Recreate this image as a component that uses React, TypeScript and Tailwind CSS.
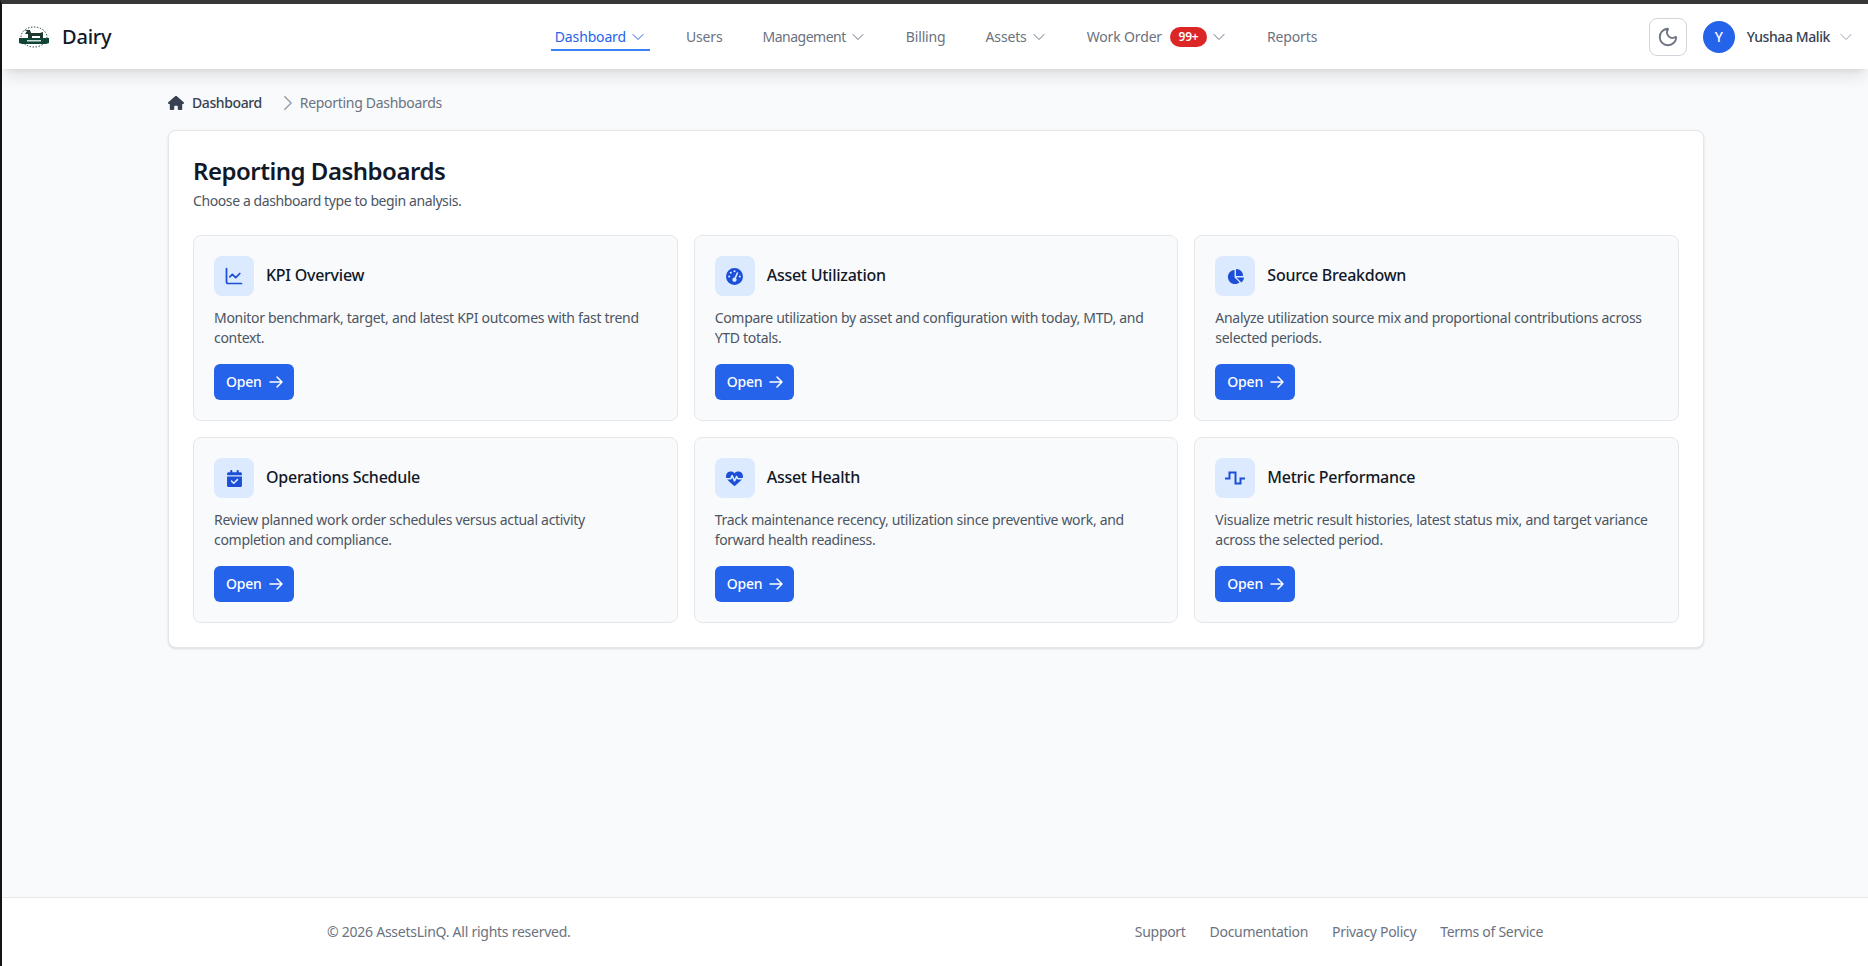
import { ChartLine, Moon } from 'lucide-react';
import { HiOutlineChevronDown, HiOutlineChevronRight, HiOutlineArrowRight } from 'react-icons/hi2';
import { FaHouse, FaGaugeHigh, FaChartPie, FaCalendarCheck, FaHeartPulse } from 'react-icons/fa6';

const navItems = [
  { label: 'Dashboard', chevron: true, active: true },
  { label: 'Users' },
  { label: 'Management', chevron: true, tight: true },
  { label: 'Billing' },
  { label: 'Assets', chevron: true },
  { label: 'Work Order', chevron: true, badge: '99+' },
  { label: 'Reports' },
];

function SquareWave() {
  return (
    <svg width="20" height="20" viewBox="0 0 20 20" fill="none" stroke="currentColor" strokeWidth="2">
      <path d="M0 10.5H4.5V4.5H10.5V15.5H15.5V10.5H20" />
    </svg>
  );
}

const cards = [
  {
    title: 'KPI Overview',
    text: 'Monitor benchmark, target, and latest KPI outcomes with fast trend context.',
    icon: <ChartLine size={20} strokeWidth={2.1} />,
  },
  {
    title: 'Asset Utilization',
    text: 'Compare utilization by asset and configuration with today, MTD, and YTD totals.',
    icon: <FaGaugeHigh size={17} />,
  },
  {
    title: 'Source Breakdown',
    text: 'Analyze utilization source mix and proportional contributions across selected periods.',
    icon: <FaChartPie size={17} />,
  },
  {
    title: 'Operations Schedule',
    text: 'Review planned work order schedules versus actual activity completion and compliance.',
    icon: <FaCalendarCheck size={17} />,
  },
  {
    title: 'Asset Health',
    text: 'Track maintenance recency, utilization since preventive work, and forward health readiness.',
    icon: <FaHeartPulse size={17} />,
  },
  {
    title: 'Metric Performance',
    text: 'Visualize metric result histories, latest status mix, and target variance across the selected period.',
    icon: <SquareWave />,
  },
];

function Logo() {
  return (
    <svg width="32" height="22" viewBox="0 0 32 22" className="shrink-0">
      <ellipse cx="16" cy="11" rx="13" ry="10" fill="none" stroke="#14342b" strokeWidth="1" strokeDasharray="1.4 1.6" />
      <path d="M1 12H31V17L28 18H4L1 17Z" fill="#0f4436" />
      <path d="M10 12V8H7L9 5L6 4H12L13 7H22L25 6V12H22V10H14V12Z" fill="#1d3a30" />
      <rect x="9" y="14" width="14" height="1.5" fill="#cfe0d8" />
    </svg>
  );
}

export default function App() {
  return (
    <div className="h-screen flex flex-col bg-[#f9fafb] border-t-4 border-t-[#373737] border-l-2 border-l-[#141414] font-['Noto_Sans',sans-serif] overflow-hidden">
      <header className="h-[65px] shrink-0 bg-white shadow-lg flex items-center pl-4 pr-[14px] relative">
        <div className="flex-1 flex items-center gap-3">
          <Logo />
          <span className="text-xl font-medium text-[#111827] tracking-[-0.2px]">Dairy</span>
        </div>
        <nav className="flex items-center gap-8 text-sm text-[#6b7280] tracking-[-0.15px]">
          {navItems.map(n => (
            <a
              key={n.label}
              className={`flex items-center gap-1 px-1 h-[26px] mt-[3px] border-b-2 ${
                n.active ? 'text-[#2563eb] border-[#3b82f6]' : 'border-transparent'
              } ${n.tight ? 'tracking-[-0.5px]' : ''}`}
            >
              {n.label}
              {n.badge && (
                <span className="ml-1 h-5 w-[37px] rounded-full bg-[#dc2626] text-white text-xs font-semibold flex items-center justify-center">
                  {n.badge}
                </span>
              )}
              {n.chevron && <HiOutlineChevronDown size={16} />}
            </a>
          ))}
        </nav>
        <div className="flex-1 flex items-center justify-end">
          <button className="w-[38px] h-[38px] rounded-lg border border-[#d1d5db] flex items-center justify-center text-[#6b7280]">
            <Moon size={22} />
          </button>
          <div className="w-8 h-8 ml-4 rounded-full bg-[#2563eb] text-white text-sm font-medium flex items-center justify-center">Y</div>
          <span className="ml-3 text-sm font-medium text-[#374151] tracking-[-0.4px]">Yushaa Malik</span>
          <HiOutlineChevronDown size={16} className="ml-2 text-[#9ca3af]" />
        </div>
      </header>

      <main className="flex-1 w-full max-w-[1538px] mx-auto pl-[2px] pt-6">
        <div className="flex items-center text-sm h-5 mb-[17px]">
          <FaHouse size={16} className="text-[#374151]" />
          <span className="ml-2 font-medium text-[#374151] tracking-[-0.4px]">Dashboard</span>
          <HiOutlineChevronRight size={20} strokeWidth={2} className="ml-4 text-[#9ca3af]" />
          <span className="ml-[2px] text-[#6b7280] tracking-[-0.3px]">Reporting Dashboards</span>
        </div>

        <section className="bg-white border border-[#e5e7eb] rounded-lg shadow-sm p-6">
          <h1 className="text-2xl font-semibold text-[#111827] tracking-[-0.5px]">Reporting Dashboards</h1>
          <p className="mt-1 mb-6 text-sm text-[#4b5563] tracking-[-0.4px]">Choose a dashboard type to begin analysis.</p>
          <div className="grid grid-cols-3 gap-4">
            {cards.map(c => (
              <div key={c.title} className="bg-[#f9fafb] border border-[#e5e7eb] rounded-lg p-5">
                <div className="flex items-center gap-3 mb-3">
                  <div className="w-10 h-10 rounded-lg bg-[#dbeafe] text-[#1d4ed8] flex items-center justify-center">
                    {c.icon}
                  </div>
                  <h2 className="text-base font-medium text-[#111827] tracking-[-0.25px] pb-[2px]">{c.title}</h2>
                </div>
                <p className="text-sm text-[#4b5563] mb-4 min-h-10 tracking-[-0.3px]">{c.text}</p>
                <button className="h-9 pl-3 pr-2.5 inline-flex items-center gap-1.5 rounded-md bg-[#2563eb] text-white text-sm font-medium tracking-[-0.2px]">
                  Open
                  <HiOutlineArrowRight size={16} strokeWidth={2.2} />
                </button>
              </div>
            ))}
          </div>
        </section>
      </main>

      <footer className="h-[69px] shrink-0 bg-white border-t border-[#e5e7eb]">
        <div className="max-w-7xl mx-auto px-8 h-full flex items-center justify-between text-sm text-[#6b7280] tracking-[-0.3px]">
          <span className="tracking-[-0.25px]">© 2026 AssetsLinQ. All rights reserved.</span>
          <div className="flex gap-6">
            <a>Support</a>
            <a>Documentation</a>
            <a>Privacy Policy</a>
            <a>Terms of Service</a>
          </div>
        </div>
      </footer>
    </div>
  );
}
